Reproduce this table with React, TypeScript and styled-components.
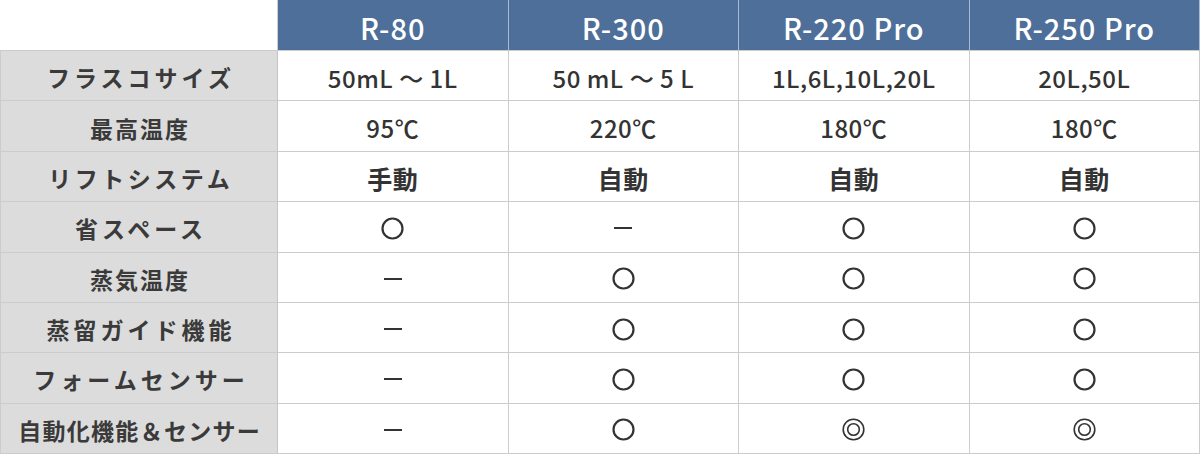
import { Fragment } from "react";
import styled, { createGlobalStyle } from "styled-components";

const GlobalStyle = createGlobalStyle`
  html, body {
    margin: 0;
    padding: 0;
    background: #ffffff;
  }
  body {
    font-family: "Noto Sans CJK JP", "Noto Sans", sans-serif;
    color: #333333;
  }
`;

const Table = styled.div`
  width: 1200px;
  height: 454px;
  display: grid;
  grid-template-columns: 278px repeat(4, 1fr);
  grid-template-rows: 51px repeat(8, 1fr);
  box-sizing: border-box;
`;

const Corner = styled.div`
  background: #ffffff;
  border-bottom: 1px solid #cccccc;
  border-right: 1px solid #cccccc;
`;

const HeadCell = styled.div`
  display: flex;
  align-items: center;
  justify-content: center;
  padding-top: 4px;
  background: #4e6f99;
  color: #ffffff;
  font-size: 29px;
  font-weight: 500;
  letter-spacing: 1px;
  border-right: 1px solid #a9bbd2;
  border-bottom: 1px solid #cccccc;
  &:last-child {
    border-right: 1px solid #cccccc;
  }
`;

const LabelCell = styled.div<{ $spacing: number }>`
  display: flex;
  align-items: center;
  justify-content: center;
  padding-top: 3px;
  padding-left: ${(p) => p.$spacing}px;
  background: #dcdcdc;
  font-size: 23px;
  font-weight: 700;
  letter-spacing: ${(p) => p.$spacing}px;
  color: #3a3a3a;
  border-left: 1px solid #cccccc;
  border-right: 1px solid #c4c4c4;
  border-bottom: 1px solid #cccccc;
`;

const ValueCell = styled.div<{ $bold?: boolean }>`
  display: flex;
  align-items: center;
  justify-content: center;
  padding-top: 3px;
  background: #ffffff;
  font-size: ${(p) => (p.$bold ? 25 : 24)}px;
  font-weight: ${(p) => (p.$bold ? 700 : 500)};
  letter-spacing: 0.5px;
  color: #333333;
  border-right: 1px solid #cccccc;
  border-bottom: 1px solid #cccccc;
`;

const Mark = styled.svg`
  width: 23px;
  height: 23px;
`;

const Dash = styled.span`
  display: block;
  width: 18px;
  height: 2px;
  background: #333333;
`;

type Value = string | "o" | "oo" | "-";

const models = ["R-80", "R-300", "R-220 Pro", "R-250 Pro"];

const rows: { label: string; spacing: number; values: Value[]; bold?: boolean }[] = [
  { label: "フラスコサイズ", spacing: 4, values: ["50mL 〜 1L", "50 mL 〜 5 L", "1L,6L,10L,20L", "20L,50L"] },
  { label: "最高温度", spacing: 2, values: ["95℃", "220℃", "180℃", "180℃"] },
  { label: "リフトシステム", spacing: 3.5, values: ["手動", "自動", "自動", "自動"], bold: true },
  { label: "省スペース", spacing: 4, values: ["o", "-", "o", "o"] },
  { label: "蒸気温度", spacing: 2, values: ["-", "o", "o", "o"] },
  { label: "蒸留ガイド機能", spacing: 4, values: ["-", "o", "o", "o"] },
  { label: "フォームセンサー", spacing: 4, values: ["-", "o", "o", "o"] },
  { label: "自動化機能＆センサー", spacing: 1.3, values: ["-", "o", "oo", "oo"] },
];

const renderValue = (v: Value) => {
  if (v === "o") {
    return (
      <Mark viewBox="0 0 23 23">
        <circle cx="11.5" cy="11.5" r="10" fill="none" stroke="#333" strokeWidth="2.2" />
      </Mark>
    );
  }
  if (v === "oo") {
    return (
      <Mark viewBox="0 0 23 23">
        <circle cx="11.5" cy="11.5" r="10.3" fill="none" stroke="#333" strokeWidth="1.6" />
        <circle cx="11.5" cy="11.5" r="5.8" fill="none" stroke="#333" strokeWidth="1.6" />
      </Mark>
    );
  }
  if (v === "-") return <Dash />;
  return v;
};

const App = () => {
  return (
    <>
      <GlobalStyle />
      <Table>
        <Corner />
        {models.map((m) => (
          <HeadCell key={m}>{m}</HeadCell>
        ))}
        {rows.map((row) => (
          <Fragment key={row.label}>
            <LabelCell $spacing={row.spacing}>{row.label}</LabelCell>
            {row.values.map((v, i) => (
              <ValueCell key={row.label + i} $bold={row.bold}>
                {renderValue(v)}
              </ValueCell>
            ))}
          </Fragment>
        ))}
      </Table>
    </>
  );
};

export default App;
